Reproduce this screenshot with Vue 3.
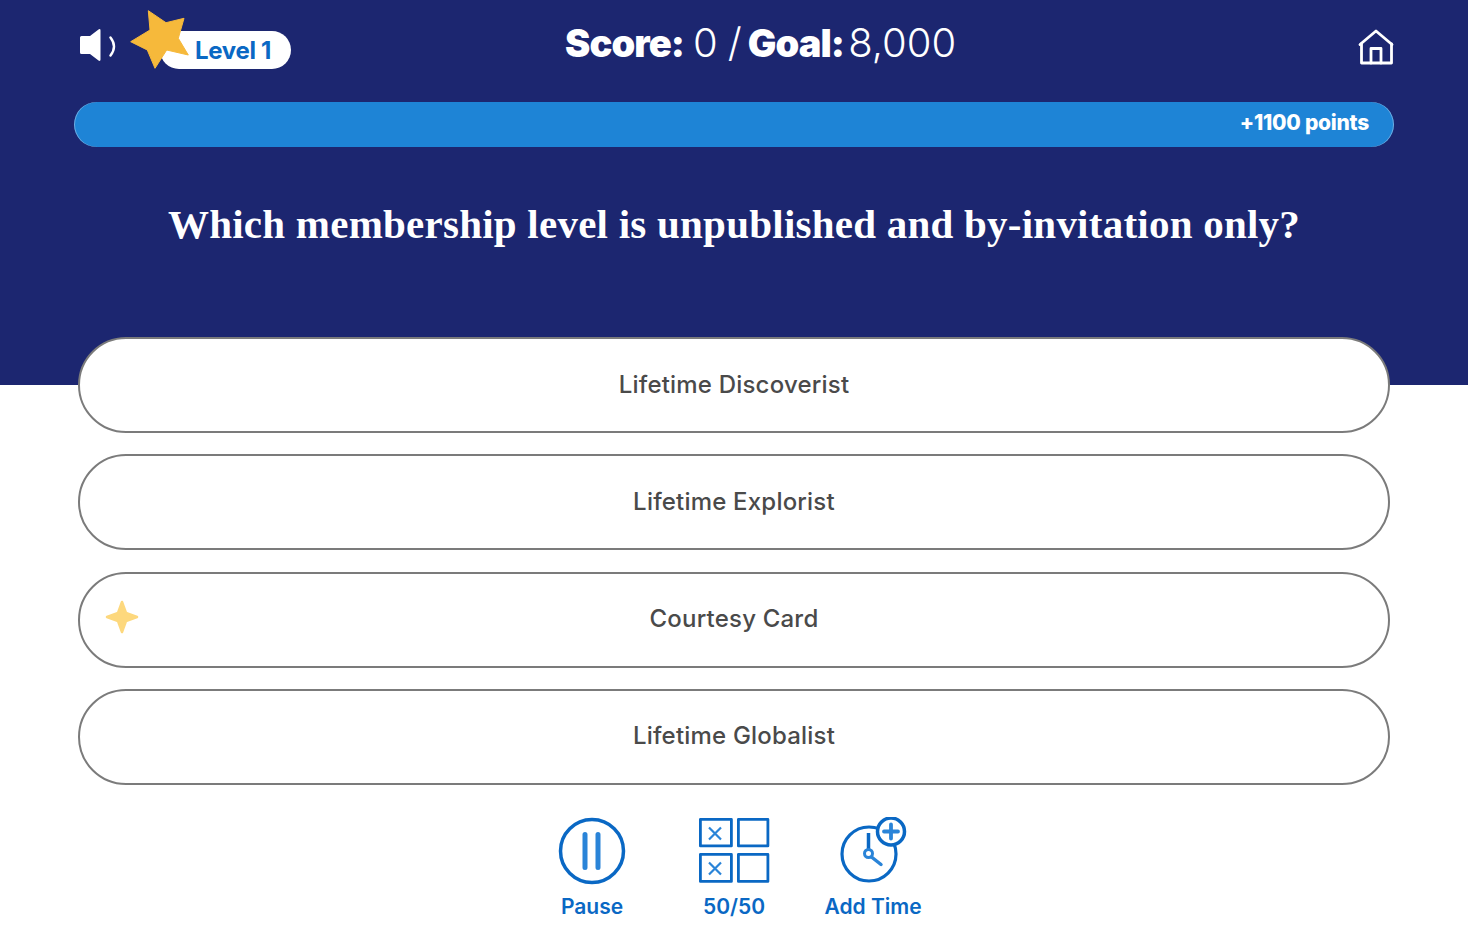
<script setup>
const answers = [
  { text: 'Lifetime Discoverist' },
  { text: 'Lifetime Explorist' },
  { text: 'Courtesy Card', sparkle: true },
  { text: 'Lifetime Globalist' }
]
</script>

<template>
  <div class="page">
    <header class="hero">
      <div class="top">
        <div class="left">
          <svg class="speaker" width="38" height="34" viewBox="0 0 38 34">
            <path d="M2.500 8H11L19.500 1.500q2-1.200 2 1v29q0 2.200-2 1L11 26H2.500Q1 26 1 24.500V9.500Q1 8 2.500 8z" fill="#fff" />
            <path d="M31.500 9.500q7 9 0 18" fill="none" stroke="#fff" stroke-width="2.400" stroke-linecap="round" />
          </svg>
          <div class="level">
            <svg class="star" width="60" height="62" viewBox="0 0 60 62">
              <path d="M18.300 1.700 36 13.700 54 9.300 48.300 29.300 58.300 46 36.700 41 25 59.300 17.300 41 .7 32.700 20 21z" fill="#f6b93b" stroke="#f6b93b" stroke-width="1" stroke-linejoin="round" />
            </svg>
            <span>Level 1</span>
          </div>
        </div>
        <div class="score">
          <b>Score:</b><span class="n0">0</span><span class="slash">/</span><b class="goal">Goal:</b><span class="n1">8,000</span>
        </div>
        <svg class="home" width="36" height="36" viewBox="0 0 36 36" fill="none" stroke="#fff" stroke-width="2.800" stroke-linejoin="round" stroke-linecap="round">
          <path d="M2 15.500 18 2l16 13.500" />
          <path d="M3.500 15v19h30V15" />
          <path d="M13 34V19.500h10V34" />
        </svg>
      </div>
      <div class="bar">+1100 points</div>
      <h1>Which membership level is unpublished and by-invitation only?</h1>
    </header>

    <main class="answers">
      <button v-for="a in answers" :key="a.text" class="answer">
        <svg v-if="a.sparkle" class="sparkle" width="36" height="36" viewBox="0 0 36 36">
          <path d="M18 3 L22 14 L33 18 L22 22 L18 33 L14 22 L3 18 L14 14z" fill="#fdd87d" stroke="#fdd87d" stroke-width="2.500" stroke-linejoin="round" />
        </svg>
        {{ a.text }}
      </button>
    </main>

    <footer class="tools">
      <div class="tool">
        <svg width="68" height="68" viewBox="0 0 68 68" fill="none">
          <circle cx="34" cy="34" r="31.500" stroke="#0a68c4" stroke-width="3.500" />
          <path d="M27 17.500v33M40 17.500v33" stroke="#2a84d8" stroke-width="5" stroke-linecap="round" />
        </svg>
        <span>Pause</span>
      </div>
      <div class="tool">
        <svg width="72" height="68" viewBox="0 0 72 68" fill="none">
          <g stroke="#0a68c4" stroke-width="2.800" stroke-linejoin="round">
            <rect x="2.400" y="2.400" width="31" height="26.500" />
            <rect x="40.400" y="2.400" width="29.500" height="26.500" />
            <rect x="2.400" y="37.400" width="31" height="27" />
            <rect x="40.400" y="37.400" width="29.500" height="27" />
          </g>
          <path d="M11 10.500l12 12M23 10.500l-12 12M11 45.500l12 12M23 45.500l-12 12" stroke="#2a84d8" stroke-width="2.200" />
        </svg>
        <span>50/50</span>
      </div>
      <div class="tool time">
        <svg width="68" height="68" viewBox="0 0 68 68" fill="none">
          <circle cx="30" cy="37" r="27" stroke="#0a68c4" stroke-width="3.200" />
          <path d="M29.500 16v18" stroke="#0a68c4" stroke-width="3.500" />
          <circle cx="29.500" cy="36.500" r="4" stroke="#2a84d8" stroke-width="3" />
          <path d="M32.500 40 42 47.500" stroke="#2a84d8" stroke-width="3.500" stroke-linecap="round" />
          <circle cx="52" cy="14.500" r="13.500" fill="#fff" stroke="#0a68c4" stroke-width="3.500" />
          <path d="M52 7.500v14M45 14.500h14" stroke="#2a84d8" stroke-width="3.800" stroke-linecap="round" />
        </svg>
        <span>Add Time</span>
      </div>
    </footer>
  </div>
</template>

<style scoped>
.page {
  width: 1468px;
  height: 942px;
  overflow: hidden;
  background: #fff;
  font-family: Inter, "Liberation Sans", sans-serif;
}
.hero {
  box-sizing: border-box;
  height: 385px;
  padding: 0 74px;
  background: #1c2670;
  color: #fff;
}
.top {
  height: 102px;
  display: flex;
  align-items: flex-start;
}
.left {
  display: flex;
  padding-top: 28px;
}
.speaker {
  margin-left: 5px;
}
.level {
  position: relative;
  box-sizing: border-box;
  width: 131px;
  height: 38px;
  margin: 3px 0 0 43px;
  padding-left: 35px;
  border-radius: 19px;
  background: #fff;
  color: #0a68c4;
  font-size: 24px;
  font-weight: 700;
  letter-spacing: -0.3px;
  line-height: 40px;
  white-space: nowrap;
}
.star {
  position: absolute;
  left: -30px;
  top: -22px;
}
.score {
  display: flex;
  align-items: baseline;
  margin: 20px 0 0 274px;
  font-size: 40px;
  line-height: 46px;
  font-weight: 300;
  white-space: nowrap;
}
.score b {
  font-size: 38px;
  font-weight: 900;
  letter-spacing: -0.9px;
}
.n0 {
  margin-left: 9px;
}
.slash {
  margin-left: 10px;
}
.goal {
  margin-left: 6px;
}
.n1 {
  margin-left: 4px;
}
.home {
  margin: 29px 0 0 auto;
}
.bar {
  box-sizing: border-box;
  height: 45px;
  padding-right: 25px;
  border-radius: 22.500px;
  background: #1e84d6;
  box-shadow: inset 1px 0 0 rgba(255, 255, 255, 0.35), inset -1px 0 0 rgba(255, 255, 255, 0.35);
  text-align: right;
  font-size: 21px;
  font-weight: 800;
  letter-spacing: -0.25px;
  line-height: 42px;
}
h1 {
  margin: 52px 0 0;
  text-align: center;
  font-family: "Liberation Serif", serif;
  font-size: 41px;
  line-height: 50px;
  font-weight: 700;
  letter-spacing: 0.24px;
}
.answers {
  display: flex;
  flex-direction: column;
  gap: 21.300px;
  margin: -48px 78px 0;
  position: relative;
}
.answer {
  position: relative;
  height: 96px;
  padding: 0 0 2px;
  border: 2px solid #7b7b7b;
  border-radius: 48px;
  background: #fff;
  color: #4a4a4a;
  font-family: inherit;
  font-size: 24px;
  font-weight: 500;
  letter-spacing: 0.2px;
  text-align: center;
}
.sparkle {
  position: absolute;
  left: 24px;
  top: 25.500px;
}
.tools {
  display: flex;
  justify-content: center;
  gap: 42px;
  padding-right: 3px;
  margin-top: 32px;
}
.tool {
  display: flex;
  flex-direction: column;
  align-items: center;
  gap: 9px;
  width: 100px;
  color: #0a68c4;
  font-size: 21px;
  font-weight: 600;
  line-height: 26px;
  white-space: nowrap;
}
.time {
  margin-left: -3px;
}
.tool svg {
  display: block;
}
</style>
